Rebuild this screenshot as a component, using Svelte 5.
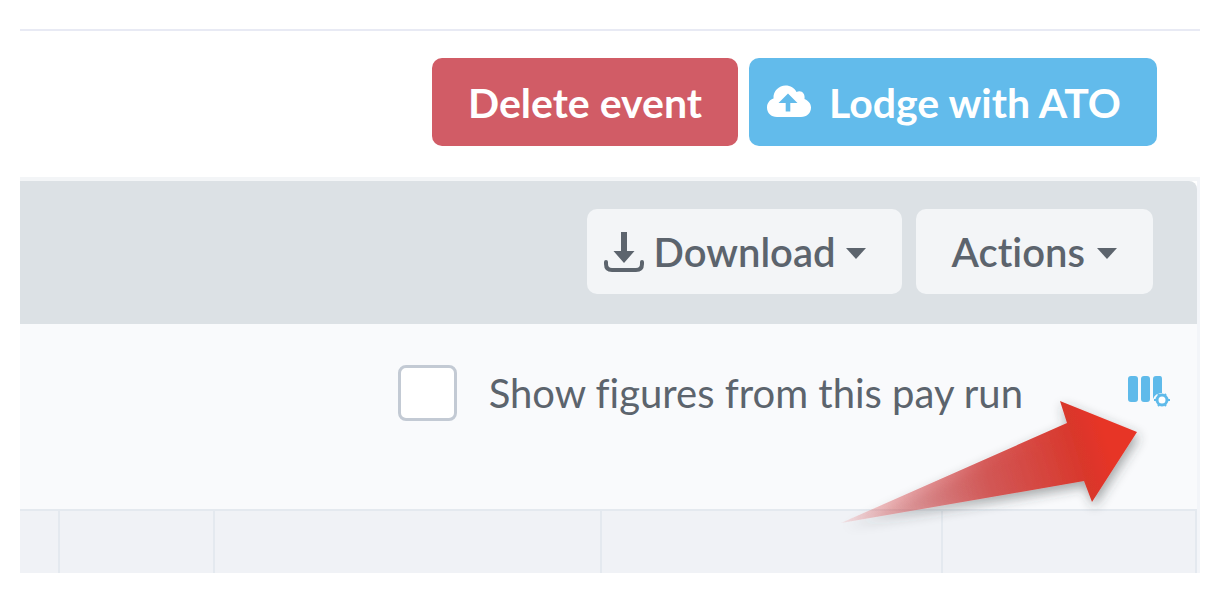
<script>
	let showFigures = $state(false);

	// share of the table width, in percent
	const columns = [3.3, 13.1, 33, 29, 21.6];
</script>

<main class="page">
	<header class="event-actions">
		<button type="button" class="btn danger">Delete event</button>
		<button type="button" class="btn primary">
			<svg class="cloud" viewBox="0 0 44 34" aria-hidden="true">
				<path fill="#fff" d="M10 32C4 32 0 28 0 22.500C0 18 3 14.500 6.500 13.500C6 6 12 0.500 18.500 0.500C23.500 0.500 27.500 3 29.500 7C34 4.500 38.500 8 37.500 14C42 16 44 19 44 22.500C44 28 40 32 34 32Z" />
				<path fill="#62bbeb" d="M21 8.500L30.500 18H23.300V26.500H18.700V18H11.500Z" />
			</svg>
			Lodge with ATO
		</button>
	</header>

	<section class="panel">
		<div class="toolbar">
			<button type="button" class="btn light download">
				<svg class="tray" viewBox="0 0 40 40" aria-hidden="true">
					<path fill="#5c646d" d="M17 0H23V19H30.500L20 31L9.500 19H17Z" />
					<path fill="none" stroke="#5c646d" stroke-width="4" stroke-linecap="round" d="M2 30V32Q2 38 8 38H32Q38 38 38 32V30" />
				</svg>
				Download
				<span class="caret"></span>
			</button>
			<button type="button" class="btn light actions">
				Actions
				<span class="caret"></span>
			</button>
		</div>

		<div class="filters">
			<label class="figures">
				<input type="checkbox" bind:checked={showFigures} />
				Show figures from this pay run
			</label>
			<button type="button" class="columns-button" aria-label="Columns">
				<svg viewBox="0 0 42 34" aria-hidden="true">
					<rect x="0" y="0" width="10" height="26" rx="3" fill="#5fbaea" />
					<rect x="13" y="0" width="9" height="26" rx="3" fill="#5fbaea" />
					<path fill="#5fbaea" d="M28 0H32Q34 0 34 3V17Q27 17 25 23V3Q25 0 28 0Z" />
					<circle cx="34" cy="24" r="5" fill="#fff" stroke="#5fbaea" stroke-width="3" />
					<path stroke="#5fbaea" stroke-width="2" d="M26 24h2M40 24h2M30 18l1 1M38 18l-1 1M30 30l1-1M38 30l-1-1" />
				</svg>
			</button>

			<svg class="pointer" viewBox="0 0 330 150" aria-hidden="true">
				<defs>
					<linearGradient id="fade" gradientUnits="userSpaceOnUse" x1="11" y1="133" x2="307" y2="42">
						<stop offset="0" stop-color="#e04040" stop-opacity="0.1" />
						<stop offset="0.25" stop-color="#d55558" stop-opacity="0.55" />
						<stop offset="0.5" stop-color="#d34c4a" stop-opacity="0.9" />
						<stop offset="0.8" stop-color="#d9372c" />
						<stop offset="0.9" stop-color="#e73427" />
						<stop offset="1" stop-color="#e73427" />
					</linearGradient>
					<filter id="shadow" x="-10%" y="-20%" width="120%" height="150%">
						<feDropShadow dx="2" dy="5" stdDeviation="6" flood-color="#303c38" flood-opacity="0.45" />
					</filter>
				</defs>
				<path fill="url(#fade)" filter="url(#shadow)" d="M11 133L237 33L230 11L307 42L262 112L254 91Z" />
			</svg>
		</div>

		<table>
			<tbody>
				<tr>
					{#each columns as width}
						<td style="width: {width}%"></td>
					{/each}
				</tr>
			</tbody>
		</table>
	</section>
</main>

<style>
	:global(body) {
		margin: 0;
		background: #fff;
	}

	.page {
		margin: 29px 26px 0 20px;
		border-top: 2px solid #e8eaf4;
		font-family: Lato, "Open Sans", sans-serif;
		font-size: 40px;
		font-variant-ligatures: none;
		color: #5c646d;
	}

	.event-actions {
		display: flex;
		justify-content: flex-end;
		gap: 11px;
		padding: 27px 43px 31px 0;
	}

	.btn {
		display: flex;
		align-items: center;
		height: 88px;
		border: 0;
		border-radius: 10px;
		font: inherit;
		font-size: 41px;
		font-weight: 700;
		color: #fff;
		white-space: nowrap;
		cursor: pointer;
	}

	.danger {
		padding: 0 36px;
		background: #d15c66;
	}

	.primary {
		gap: 18px;
		padding: 0 36px 0 18px;
		background: #62bbeb;
	}

	.cloud {
		width: 44px;
		height: 34px;
	}

	.panel {
		border-top: 4px solid #f3f5f7;
		border-right: 3px solid #f3f5f9;
	}

	.toolbar {
		display: flex;
		justify-content: flex-end;
		gap: 14px;
		padding: 28px 44px 30px 0;
		border-top-right-radius: 8px;
		background: #dce1e5;
	}

	.light {
		height: 85px;
		background: #f3f5f7;
		font-size: 40px;
		font-weight: 600;
		color: #5c646d;
	}

	.download {
		gap: 10px;
		padding: 0 36px 0 17px;
	}

	.actions {
		gap: 12px;
		padding: 0 36px;
	}

	.tray {
		width: 40px;
		height: 40px;
	}

	.caret {
		margin-top: 4px;
		border-top: 11px solid #5c646d;
		border-right: 10px solid transparent;
		border-left: 10px solid transparent;
	}

	.filters {
		position: relative;
		display: flex;
		justify-content: flex-end;
		align-items: flex-start;
		gap: 105px;
		height: 144px;
		padding: 41px 27px 0 0;
		background: #f9fafc;
	}

	.figures {
		display: flex;
		align-items: center;
		gap: 32px;
		white-space: nowrap;
	}

	.figures input {
		appearance: none;
		width: 59px;
		height: 56px;
		margin: 0;
		border: 3px solid #c3cad4;
		border-radius: 8px;
		background: #fff;
	}

	.figures input:checked {
		background: #62bbeb;
	}

	.columns-button {
		display: flex;
		align-items: center;
		width: 42px;
		height: 56px;
		padding: 0;
		border: 0;
		background: none;
		cursor: pointer;
	}

	.columns-button svg {
		width: 42px;
		height: 34px;
	}

	/* the callout arrow lies over the filters and the table below */
	.pointer {
		position: absolute;
		top: 66px;
		right: 37px;
		width: 330px;
		height: 150px;
		overflow: visible;
		pointer-events: none;
	}

	table {
		width: 100%;
		table-layout: fixed;
		border-collapse: separate;
		border-spacing: 0;
	}

	td {
		height: 62px;
		padding: 0;
		border-top: 2px solid #e4e9ef;
		border-right: 2px solid #e4e9ef;
		background: #f0f2f6;
	}
</style>
